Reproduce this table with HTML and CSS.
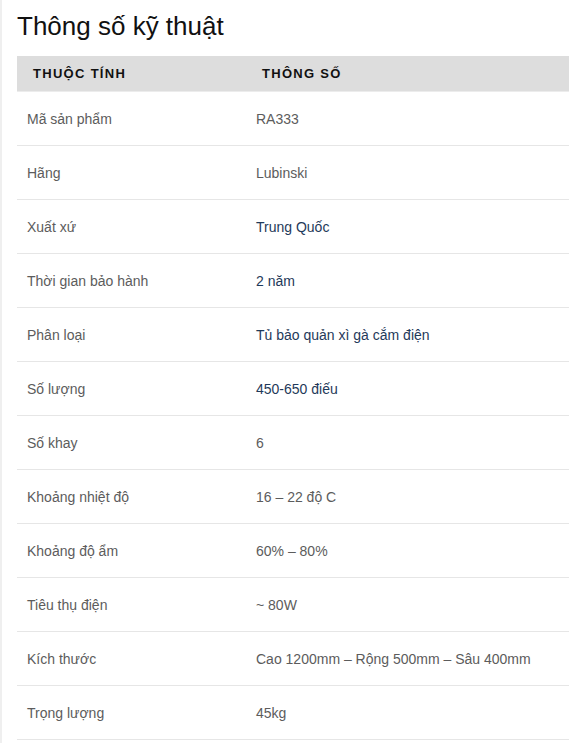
FILE: index.html
```html
<!DOCTYPE html>
<html lang="vi">
<head>
<meta charset="utf-8">
<title>Thông số kỹ thuật</title>
<link rel="stylesheet" href="styles.css">
</head>
<body>
<div class="page">
  <h2 class="title">Thông số kỹ thuật</h2>
  <table class="specs">
    <thead>
      <tr><th class="c1">Thuộc tính</th><th>Thông số</th></tr>
    </thead>
    <tbody>
      <tr><td>Mã sản phẩm</td><td>RA333</td></tr>
      <tr><td>Hãng</td><td>Lubinski</td></tr>
      <tr><td>Xuất xứ</td><td class="em">Trung Quốc</td></tr>
      <tr><td>Thời gian bảo hành</td><td class="em">2 năm</td></tr>
      <tr><td>Phân loại</td><td class="em">Tủ bảo quản xì gà cắm điện</td></tr>
      <tr><td>Số lượng</td><td class="em">450-650 điếu</td></tr>
      <tr><td>Số khay</td><td>6</td></tr>
      <tr><td>Khoảng nhiệt độ</td><td>16 – 22 độ C</td></tr>
      <tr><td>Khoảng độ ẩm</td><td>60% – 80%</td></tr>
      <tr><td>Tiêu thụ điện</td><td>~ 80W</td></tr>
      <tr><td>Kích thước</td><td>Cao 1200mm – Rộng 500mm – Sâu 400mm</td></tr>
      <tr><td>Trọng lượng</td><td>45kg</td></tr>
    </tbody>
  </table>
</div>
</body>
</html>
```
FILE: styles.css
```css
html, body {
  margin: 0;
  padding: 0;
  background: #ffffff;
}
body {
  border-left: 2px solid #efefef;
  font-family: Arial, "Liberation Sans", sans-serif;
  min-height: 743px;
  box-sizing: border-box;
}
.page {
  padding: 10px 0 0 15px;
}
.title {
  margin: 0 0 14px 0;
  font-size: 26px;
  line-height: 32px;
  font-weight: normal;
  color: #111111;
}
.specs {
  width: 100%;
  border-collapse: collapse;
  table-layout: fixed;
}
.specs th {
  background: #dddddd;
  height: 35px;
  padding: 0 16px;
  text-align: left;
  font-size: 13px;
  font-weight: bold;
  text-transform: uppercase;
  letter-spacing: 1.3px;
  color: #111111;
  border-bottom: 1px solid #ececec;
}
.specs th.c1 {
  width: 197px;
}
.specs td {
  height: 53px;
  padding: 0 10px;
  font-size: 14px;
  color: #5c5c5c;
  border-bottom: 1px solid #e6e6e6;
  vertical-align: middle;
}
.specs td.em {
  color: #1f3a5a;
}
```
